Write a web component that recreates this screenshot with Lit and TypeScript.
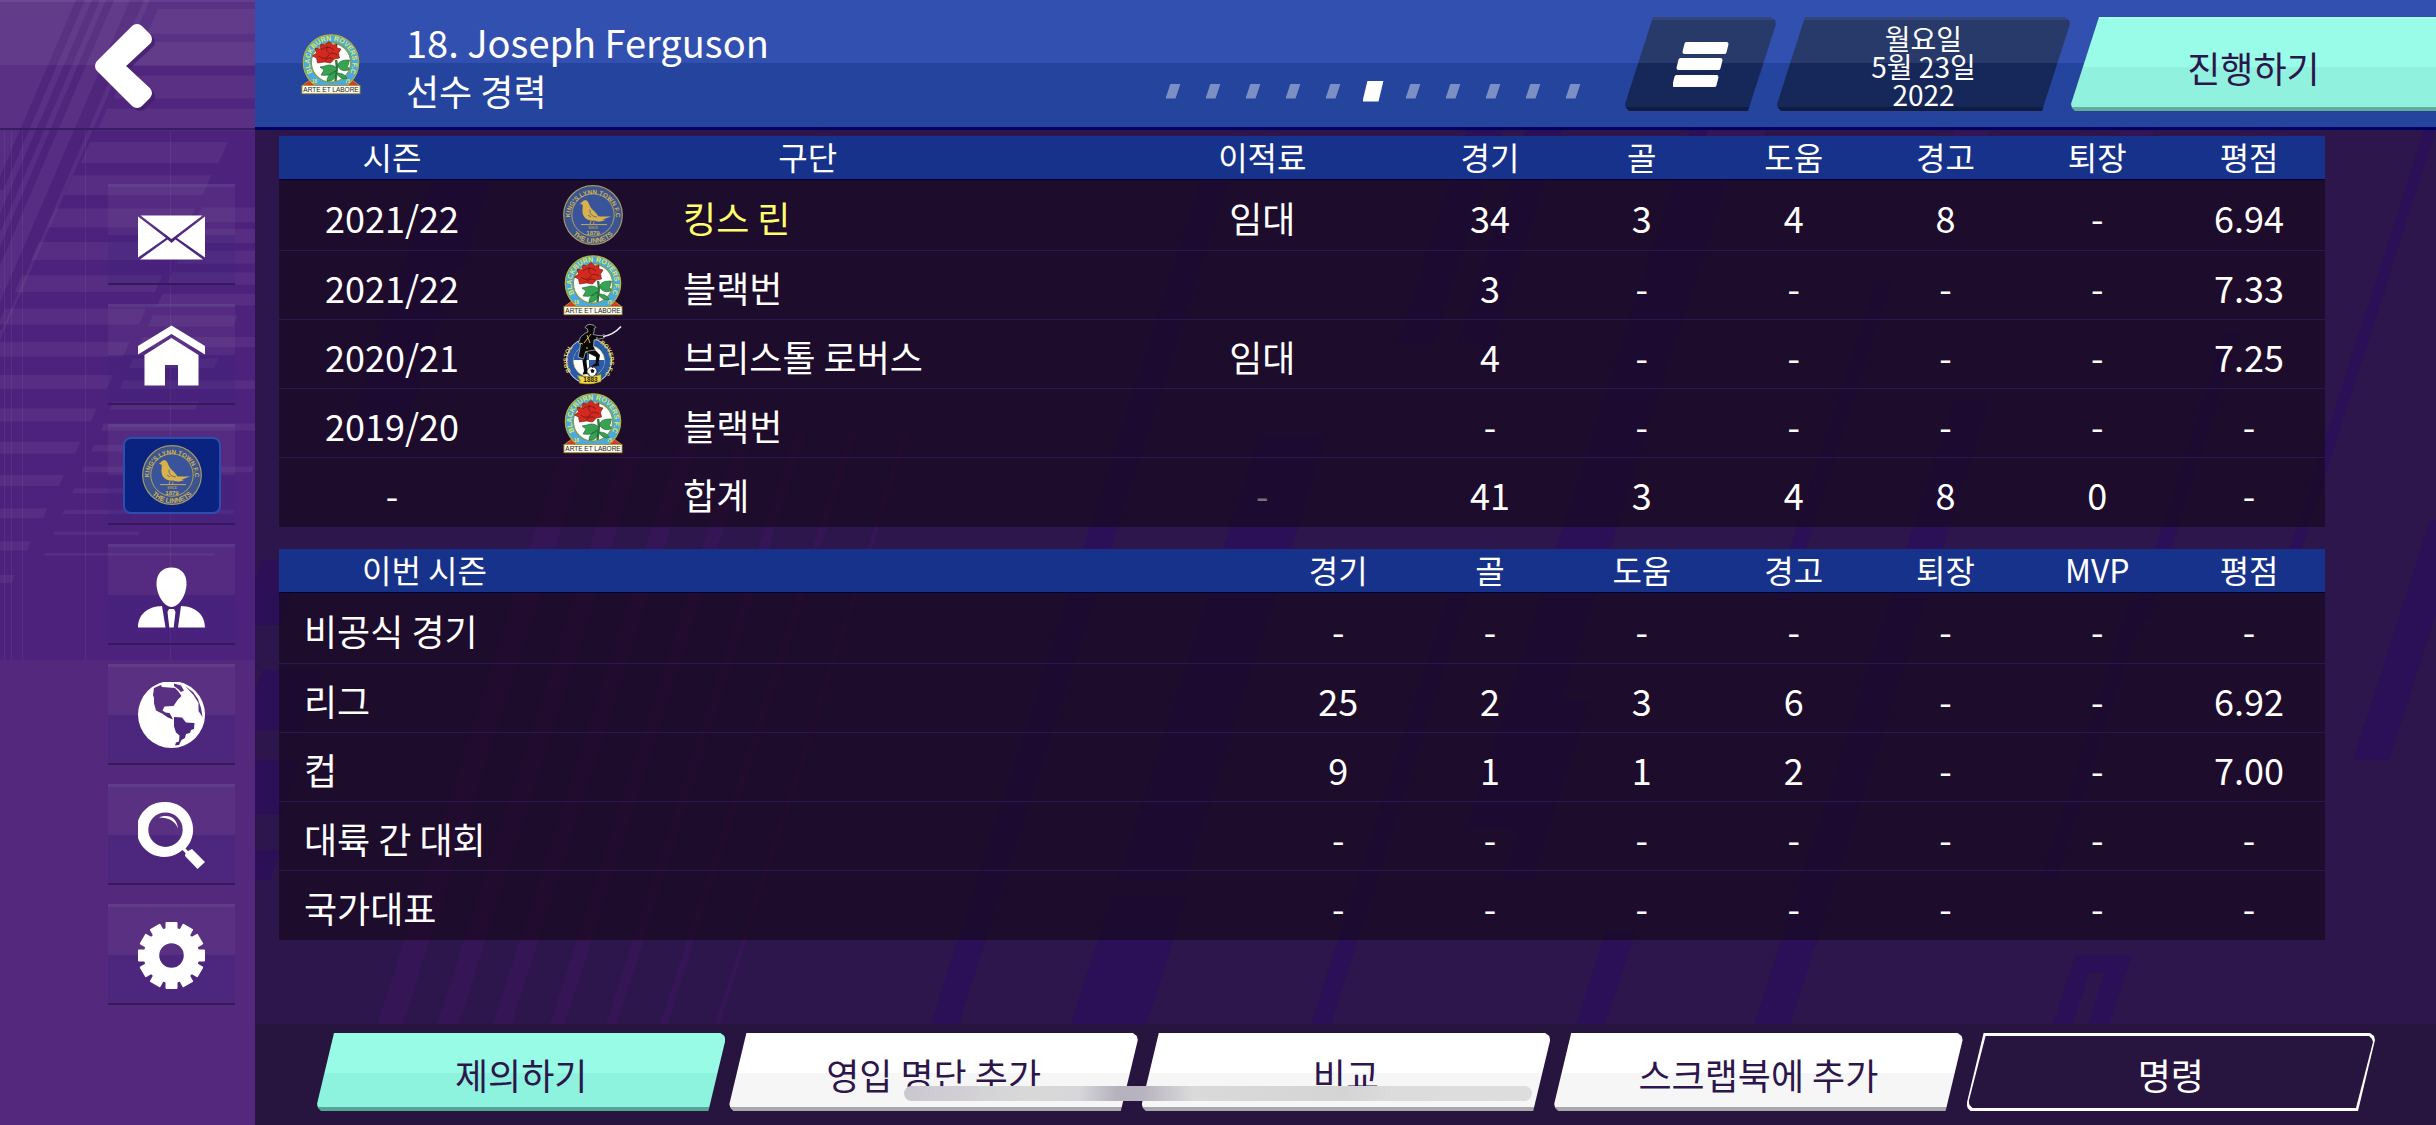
import { LitElement, html, svg, css, nothing } from "lit";
import { customElement, property } from "lit/decorators.js";
import { classMap } from "lit/directives/class-map.js";

type Club = "kings" | "blackburn" | "bristol";

@customElement("club-crest")
export class ClubCrest extends LitElement {
  @property() club: Club = "blackburn";

  static styles = css`
    :host {
      display: block;
      width: 60px;
      height: 60px;
    }
    svg {
      display: block;
      width: 100%;
      height: 100%;
      overflow: visible;
      font-family: "Liberation Sans", sans-serif;
      font-weight: 700;
    }
  `;

  private kings() {
    return svg`
      <defs>
        <path id="top" d="M7.2 32a22.8 22.8 0 1 1 45.6 0" />
        <path id="base" d="M2 30a28 28 0 0 0 56 0" />
      </defs>
      <circle cx="30" cy="30" r="29.3" fill="#3c558f" stroke="#a59a68" stroke-width="1.2" />
      <circle cx="30" cy="30" r="21.2" fill="#39549a" stroke="#b5a15c" stroke-width="1" />
      <text fill="#cdb257" font-size="6.3"><textPath href="#top" startOffset="50%" text-anchor="middle">KING'S LYNN TOWN F.C</textPath></text>
      <text fill="#cdb257" font-size="6.8"><textPath href="#base" startOffset="50%" text-anchor="middle">THE LINNETS</textPath></text>
      <path fill="#d9b24a" d="M17 18.4l2.2-1.4c1-2 4.6-2.4 6 .2 1.4 2.6 2 5.400 4.400 7.600 3 2.600 4.600 4.600 5.600 6.400 4.400.6 8.600.2 13 .2-3 1.200-5.800 2-8.600 3.200 1 .2 2 .2 3 .1-3.400 1.900-8.200 2.400-11.400.9-6.600.6-11.600-3.200-11.800-9.400-.1-3 .9-4.800.1-6.500z" />
      <path fill="none" stroke="#39549a" stroke-width=".7" d="M27 24.500c-.5 4 1.500 7 7 7.500M25 30l3 2" />
      <path stroke="#c9a94f" stroke-width="1" d="M18 39.600h26" />
      <path stroke="#c9a94f" stroke-width=".9" d="M28 36l-1 3.500M31 36.500l-.5 3" />
      <text x="30" y="44" font-size="3.2" fill="#a89a5c" text-anchor="middle">SINCE</text>
      <text x="30" y="49.500" font-size="6" fill="#d3b552" text-anchor="middle">1879</text>
    `;
  }

  private blackburn() {
    return svg`
      <defs>
        <path id="ring" d="M12.200 40a21.400 21.400 0 1 1 35.600 0" />
      </defs>
      <path fill="#d63a2c" stroke="#b9a52c" stroke-width=".8" d="M1.500 51.500l8-6h41l8 6z" />
      <circle cx="30" cy="28.500" r="27.700" fill="#4aa9df" stroke="#b5b534" stroke-width="1.200" />
      <circle cx="30" cy="28.500" r="19.600" fill="#fff" stroke="#8f9a2c" stroke-width="1.100" />
      <text fill="#e3e84c" font-size="7"><textPath href="#ring" startOffset="50%" text-anchor="middle">BLACKBURN ROVERS F.C</textPath></text>
      <text x="13.500" y="48.800" font-size="4.600" fill="#e3e84c" text-anchor="middle">18</text>
      <text x="46.500" y="48.800" font-size="4.600" fill="#e3e84c" text-anchor="middle">75</text>
      <path fill="none" stroke="#2b7a3a" stroke-width="2.400" d="M35 26c2 8 0 14-.5 21" />
      <path fill="#36a352" stroke="#1d5c2d" stroke-width=".6" d="M36.500 32c1-5 5-6 12-6-1 3-.5 5-2.500 6.500 0 0 2 .5 2 3-4 2.500-9 1-11.500-3.500zM36 35c-2-4-8-5-12-3l-5 1 4 3-3 5c6 1 13 0 16-6zM35 37c-5 1-9 5-9 10 5 1 9-2 9-10zM36 39c1 4 5 6 10 6-1-4-5-6-10-6z" />
      <path fill="#d32a20" stroke="#6d1512" stroke-width=".6" d="M14 14l5 1 1-5 4 1 4-3.500 4 3.500 4-1v4l4 1-2.500 4 1 5-5 1-4 4-6-1-7 1-1-5-4-2 4-3z" />
      <path fill="none" stroke="#7c1713" stroke-width=".9" d="M20 16c3-3 9-4 13 0M18 22c3 3 7 3 9 0s5-4 9-1M24 27c1-3 4-4 8-2M27 12c-2 3-2 5 1 7" />
      <rect x="1" y="51.500" width="58" height="8.200" fill="#fffdf2" stroke="#a8922a" stroke-width=".9" />
      <text x="30" y="58" font-size="6.500" font-weight="400" fill="#222" text-anchor="middle">ARTE ET LABORE</text>
    `;
  }

  private bristol() {
    return svg`
      <defs>
        <path id="left" d="M17.500 55.500a20.500 20.500 0 0 1 3-39" />
        <path id="right" d="M31 17a20.500 20.500 0 0 1 6 37.500" />
      </defs>
      <circle cx="26" cy="37" r="22.500" fill="#2a5aa8" stroke="#dfe6ee" stroke-width="1" />
      <circle cx="26" cy="37" r="15.500" fill="#fff" stroke="#e5d84a" stroke-width=".6" />
      <path fill="#2a5aa8" d="M26 36V21.500A15.500 15.500 0 0 0 10.500 36zM26 36v16.500A15.500 15.500 0 0 0 41.500 36z" />
      <text fill="#eadf4e" font-size="6"><textPath href="#left" startOffset="50%" text-anchor="middle">BRISTOL</textPath></text>
      <text fill="#eadf4e" font-size="6"><textPath href="#right" startOffset="50%" text-anchor="middle">ROVERS F.C</textPath></text>
      <path fill="#08080a" d="M20 27l4 1-.5 10L25 50l-5.500.5L21 47l-1.500-10z" />
      <path fill="#08080a" d="M23 24l6-1 8 8-1.500 8 1 2.500-7 1.500v-2l3-1.500.5-6.500-8-4z" />
      <path fill="#08080a" stroke="#e3e6ea" stroke-width=".6" d="M22 3.500l2-2.500 3-.7 4 1 2 2.200-2 .8.3 3-1.300 3 4 1 5 .5 2-1.500 1.500 1.500L41 14l-8 1.500-2 .5-.5 6 2 4-7 1-3 1-2 7-5.500-2 1.500-6 1-7-2-1 2-6 5-4 2.500-1-.5-3z" />
      <path fill="none" stroke="#d9b93a" stroke-width="1" d="M24 11l3 8M28 10l-7 9M17 19l3 1M23 24h2M22 28h2M34 13v2" />
      <path fill="none" stroke="#e6e9ee" stroke-width="1.700" d="M40 12.500c7-1 13-4.500 18-10" />
      <circle cx="29" cy="47.500" r="5" fill="#fff" stroke="#111" stroke-width=".8" />
      <path fill="#111" d="M27.500 46l2-1 2 1.500-.8 2.300h-2.400zM25 49l1.500 1-.5 1.500zM32 50l1.500-1v2.500zM28 42.800l3 .2-1.500 1z" />
      <path fill="#f2d93c" stroke="#9b8420" stroke-width=".6" d="M14.500 51.500c8 2 16 1.500 23.500-1v7c-7 2.500-15 3-22 1.500l1.500-2z" />
      <text x="27.500" y="58" font-size="6.500" fill="#2a2410" text-anchor="middle">1883</text>
    `;
  }

  render() {
    const art =
      this.club === "kings" ? this.kings() : this.club === "bristol" ? this.bristol() : this.blackburn();
    return html`<svg viewBox="0 0 60 60" aria-hidden="true">${art}</svg>`;
  }
}

interface CareerRow {
  season: string;
  club?: Club;
  name: string;
  fee: string;
  muted?: boolean;
  current?: boolean;
  stats: string[];
}

const CAREER: CareerRow[] = [
  { season: "2021/22", club: "kings", name: "킹스 린", fee: "임대", current: true, stats: ["34", "3", "4", "8", "-", "6.94"] },
  { season: "2021/22", club: "blackburn", name: "블랙번", fee: "", stats: ["3", "-", "-", "-", "-", "7.33"] },
  { season: "2020/21", club: "bristol", name: "브리스톨 로버스", fee: "임대", stats: ["4", "-", "-", "-", "-", "7.25"] },
  { season: "2019/20", club: "blackburn", name: "블랙번", fee: "", stats: ["-", "-", "-", "-", "-", "-"] },
  { season: "-", name: "합계", fee: "-", muted: true, stats: ["41", "3", "4", "8", "0", "-"] },
];

const THIS_SEASON: { name: string; stats: string[] }[] = [
  { name: "비공식 경기", stats: ["-", "-", "-", "-", "-", "-", "-"] },
  { name: "리그", stats: ["25", "2", "3", "6", "-", "-", "6.92"] },
  { name: "컵", stats: ["9", "1", "1", "2", "-", "-", "7.00"] },
  { name: "대륙 간 대회", stats: ["-", "-", "-", "-", "-", "-", "-"] },
  { name: "국가대표", stats: ["-", "-", "-", "-", "-", "-", "-"] },
];

const gearTeeth = Array.from({ length: 12 }, (_, i) => i * 30);

const ICONS = {
  mail: svg`
    <path fill="#fff" d="M2.500 13.500h62L33.500 37z" />
    <path fill="#fff" d="M0 14.500L28 36 0 55.500zM67 14.500L39 36l28 19.500z" />
    <path fill="#fff" d="M2 57.500L29.500 37.500l4 3.500 4-3.500L65 57.500z" />`,
  home: svg`
    <path fill="#fff" d="M33.500 3.500L67 24v8.500L33.500 12 0 32.500V24z" />
    <path fill="#fff" d="M33.500 16L60.500 33v30.500H40V43H27v20.500H6.500V33z" />`,
  person: svg`
    <path fill="#fff" d="M33.500 5.500c9 0 15 6 15 16 0 12-8 23.500-15 23.500s-15-11.500-15-23.500c0-10 6-16 15-16z" />
    <path fill="#fff" d="M24 44l3.500 21.500H0C0 53 9 44.500 24 44zM43 44c15 .5 24 9 24 21.500H40z" />
    <path fill="#fff" d="M31 47h5l1.500 3-1.800 15.500h-4.400L29.500 50z" />`,
  globe: svg`
    <path fill="#fff" fill-rule="evenodd" d="M33.500 -1a33.500 33.500 0 1 1 0 67 33.500 33.500 0 0 1 0-67zM16 6l7-3 1 2 13 1 3 3 3.500 5-4 4-4 6-9 .5-2 4 3 2 4 .5 2 3.500 1.500 3-5-2-6-4-6-3-2-7V16l-1-3zM36 35l8 .5 4 5 8.500.5-.5 6-3 1-1 3-4 1-1 4-3.500 2-2.500 5-4 .5 1-3 3-1 .5-6-3.500-3-2-6V37zM36 1.500l7 2 3 5-3 1.500-3-3-4-3zM47 4l8 6 5 7 3 9 1.500 9-4-6v-8l-5-8z" />`,
  search: svg`
    <path fill="#fff" fill-rule="evenodd" d="M27.500 0a27.500 27.500 0 0 1 20 46.500l2.500 2.500 4-2L67 60l-7.500 7L47 54l.500-3-3-3A27.500 27.500 0 1 1 27.500 0zM27.500 10.500a17.200 17.200 0 1 0 0 34.400 17.200 17.200 0 0 0 0-34.400z" />
    <path fill="#fff" d="M21 15.500c10-4 18 .5 19 11-3-7.500-9-11-19-11z" />`,
  gear: svg`
    <circle cx="33.500" cy="33.500" r="20" fill="none" stroke="#fff" stroke-width="15.500" />
    ${gearTeeth.map(
      (angle) => svg`<path fill="#fff" stroke="#fff" stroke-width="2" stroke-linejoin="round" transform="rotate(${angle} 33.500 33.500)" d="M28.500 1h10v9h-10z" />`
    )}`,
};

const MENU: { label: string; icon?: unknown }[] = [
  { label: "받은 편지함", icon: ICONS.mail },
  { label: "홈", icon: ICONS.home },
  { label: "구단" },
  { label: "감독", icon: ICONS.person },
  { label: "세계", icon: ICONS.globe },
  { label: "검색", icon: ICONS.search },
  { label: "설정", icon: ICONS.gear },
];

/* Slanted band: top-left corner, width, and the y at which it ends. */
const band = (x: number, y: number, w: number, end: number, slope: number, fill: string) => {
  const shift = (end - y) * slope;
  return svg`<path fill=${fill} d="M${x} ${y}h${w}L${x + w - shift} ${end}h${-w}z" />`;
};

const BLUE = "#2c1057";
const PLUM = "#351556";
const BACKDROP: [number, number, number, number, string][] = [
  [564, 440, 26, 1025, PLUM], [624, 440, 22, 1025, PLUM], [683, 430, 19, 1025, PLUM],
  [740, 430, 15, 1025, PLUM], [796, 430, 11, 1025, PLUM], [850, 430, 8, 1025, PLUM],
  [905, 430, 5, 1025, PLUM],
  [430, 183, 60, 270, BLUE], [400, 270, 56, 440, BLUE],
  [1200, 183, 28, 1025, BLUE], [1466, 130, 36, 345, BLUE], [1526, 130, 36, 345, BLUE],
  [1260, 434, 68, 880, BLUE], [1112, 895, 76, 1025, BLUE],
  [1690, 130, 54, 830, BLUE], [1450, 590, 20, 1025, BLUE], [1876, 280, 16, 600, BLUE],
  [1954, 400, 36, 1025, BLUE], [1606, 930, 30, 1025, BLUE], [1560, 700, 30, 880, BLUE],
  [2130, 600, 16, 880, BLUE], [2424, 130, 12, 560, BLUE], [2225, 330, 16, 620, BLUE],
  [2430, 520, 36, 760, BLUE], [262, 560, 40, 625, BLUE], [262, 670, 60, 730, BLUE],
  [250, 760, 50, 815, BLUE], [250, 850, 30, 880, BLUE],
  [2075, 955, 20, 1025, BLUE], [2110, 955, 22, 1025, BLUE], [2090, 955, 28, 973, BLUE],
  [1708, 130, 58, 137, PLUM], [1955, 130, 34, 137, PLUM], [2120, 130, 34, 137, PLUM],
];

const RAIL_LIGHT = "rgba(255,255,255,.05)";
const RAIL_DARK = "rgba(66,22,112,.45)";

@customElement("app-root")
export class AppRoot extends LitElement {
  static styles = css`
    :host {
      --ink: #2d164b;
      --mint: #98fbe6;
      --bar: #17328b;
      display: block;
      color: #fff;
      font-family: "Noto Sans CJK KR", sans-serif;
      font-size: 36px;
      line-height: 48px;
    }
    * {
      box-sizing: border-box;
    }
    button {
      margin: 0;
      padding: 0;
      border: 0;
      background: none;
      color: inherit;
      font: inherit;
      cursor: pointer;
    }
    .app {
      position: relative;
      display: grid;
      grid-template-columns: 255px minmax(0, 1fr);
      min-height: 100vh;
      overflow: hidden;
      background: #2d164b;
    }

    .rail {
      position: relative;
      isolation: isolate;
      display: flex;
      flex-direction: column;
      background: linear-gradient(#4d227c 660px, #53287d 660px);
    }
    .rail-art {
      position: absolute;
      z-index: -1;
      inset: 0 auto auto 0;
      width: 255px;
      height: 660px;
    }
    .back {
      display: block;
      height: 130px;
      border-top: 2px solid rgba(255, 255, 255, 0.12);
      border-bottom: 2px solid #3a1d60;
      background: linear-gradient(rgba(255, 255, 255, 0.07) 50%, rgba(255, 255, 255, 0.015) 50%);
    }
    .back svg {
      display: block;
      width: 255px;
      height: 126px;
    }
    .menu {
      display: flex;
      flex-direction: column;
      gap: 19px;
      margin: 0;
      padding: 54px 20px 0 108px;
      list-style: none;
    }
    .tile {
      display: flex;
      align-items: center;
      justify-content: center;
      width: 127px;
      height: 101px;
      border-top: 3px solid rgba(255, 255, 255, 0.1);
      border-bottom: 2px solid #371858;
      background: linear-gradient(rgba(255, 255, 255, 0.04) 50%, rgba(58, 35, 125, 0.25) 50%);
    }
    .icon {
      display: block;
      width: 67px;
      height: 67px;
    }
    .badge {
      display: flex;
      align-items: center;
      justify-content: center;
      width: 98px;
      height: 77px;
      border: 2px solid #2a4fae;
      border-radius: 8px;
      background: #0a2280;
    }

    .main {
      position: relative;
      isolation: isolate;
      display: flex;
      flex-direction: column;
      min-width: 0;
    }
    .backdrop {
      position: absolute;
      z-index: -1;
      inset: 0;
      width: 100%;
      height: 100%;
    }
    .top {
      display: flex;
      height: 130px;
      padding-left: 46px;
      border-bottom: 3px solid #00005f;
      background: linear-gradient(#3250af 50%, #24449d 50%);
    }
    .top club-crest {
      margin-top: 34px;
    }
    .title {
      flex: 1;
      min-width: 0;
      padding: 18px 0 0 45px;
    }
    .title h1,
    .title h2 {
      margin: 0;
      font-size: 38px;
      font-weight: 400;
      line-height: 48px;
      white-space: nowrap;
    }
    .title h2 {
      font-size: 36px;
    }
    .pages {
      display: flex;
      align-items: center;
      align-self: flex-end;
      width: 440px;
      height: 22px;
      margin: 0 32px 25px 0;
      padding: 0;
      list-style: none;
    }
    .pages li {
      flex: 1;
      display: flex;
      justify-content: center;
    }
    .pages button {
      width: 15px;
      height: 15px;
      background: #7b8fc5;
      clip-path: polygon(5px 0, 100% 0, calc(100% - 5px) 100%, 0 100%);
    }
    .pages button.on {
      width: 21px;
      height: 21px;
      background: #fff;
    }

    .slant {
      --lean: 17px;
      position: relative;
      isolation: isolate;
      display: flex;
      align-items: center;
      justify-content: center;
      text-align: center;
      white-space: nowrap;
      clip-path: polygon(
        var(--lean) 0,
        calc(100% - 5px) 0,
        calc(100% - 1px) 3px,
        100% 7px,
        calc(100% - var(--lean)) 100%,
        4px 100%,
        1px calc(100% - 3px),
        0 calc(100% - 7px)
      );
    }
    .controls {
      display: flex;
      gap: 1px;
      padding-top: 17px;
    }
    .controls .slant {
      --lean: 28px;
      height: 94px;
    }
    .dark {
      border-top: 3px solid #33457a;
      border-bottom: 4px solid #101c40;
      background: linear-gradient(#273a6a 50%, #162859 50%);
    }
    .more {
      width: 151px;
    }
    .more svg {
      display: block;
      width: 56px;
      height: 46px;
    }
    .date {
      width: 293px;
      padding-top: 4px;
      font-size: 28px;
      line-height: 28px;
    }
    .next {
      width: 365px;
      padding-top: 8px;
      border-top: 2px solid #a6fff0;
      border-bottom: 4px solid #63ac9c;
      background: linear-gradient(#98fce8 54%, #90f1de 54%);
      color: var(--ink);
    }
    .controls .next {
      clip-path: polygon(28px 0, 100% 0, 100% 100%, 4px 100%, 1px calc(100% - 3px), 0 calc(100% - 7px));
    }

    .content {
      flex: 1;
      display: flex;
      flex-direction: column;
      gap: 22px;
      padding: 6px 111px 24px 24px;
    }
    table {
      width: 100%;
      border-spacing: 0;
      table-layout: fixed;
      background: rgba(18, 6, 17, 0.56);
      text-align: center;
    }
    th,
    td {
      padding: 0;
      font-weight: 400;
      white-space: nowrap;
    }
    thead th {
      height: 44px;
      padding-bottom: 3px;
      border-bottom: 1px solid #020238;
      background: var(--bar);
      font-size: 32px;
      line-height: 40px;
    }
    tbody th,
    tbody td {
      height: 69px;
      padding-top: 3px;
      border-bottom: 1px solid #2b174d;
    }
    tbody tr:first-child > * {
      height: 71px;
    }
    tbody tr:last-child > * {
      border-bottom: 0;
    }
    .c-season {
      width: 11.05%;
    }
    .c-crest {
      width: 8.6%;
    }
    .c-name {
      width: 20.99%;
    }
    .c-fee {
      width: 14.84%;
    }
    .c-stat {
      width: 7.42%;
    }
    tbody .crest {
      padding: 0;
    }
    .crest club-crest {
      margin: 0 auto;
    }
    .name {
      padding-left: 2px;
      text-align: left;
    }
    .current {
      color: #ffff6b;
    }
    .muted {
      color: #77707d;
    }
    thead .lead {
      padding-left: 83px;
      text-align: left;
    }
    tbody .lead {
      padding-left: 25px;
      text-align: left;
    }

    .actions {
      display: grid;
      grid-template-columns: repeat(5, minmax(0, 1fr));
      gap: 4px;
      padding: 9px 61px 14px 62px;
      background: #27153f;
    }
    .actions .slant {
      height: 78px;
      padding-top: 7px;
      border-bottom: 4px solid #a8a7ac;
      background: linear-gradient(#fff 54%, #f6f6f6 54%);
      color: var(--ink);
    }
    .actions .primary {
      border-bottom-color: #52a794;
      background: linear-gradient(var(--mint) 54%, #8df2de 54%);
    }
    .actions .ghost {
      border-bottom: 0;
      padding-top: 3px;
      background: #fff;
      color: #fff;
    }
    .ghost::before {
      content: "";
      position: absolute;
      z-index: -1;
      inset: 3px 2px;
      background: #27153f;
      clip-path: polygon(
        17px 0,
        calc(100% - 4px) 0,
        calc(100% - 1px) 3px,
        100% 6px,
        calc(100% - 17px) 100%,
        4px 100%,
        1px calc(100% - 3px),
        0 calc(100% - 6px)
      );
    }
    .home-bar {
      position: absolute;
      bottom: 24px;
      left: 50%;
      width: 628px;
      height: 15px;
      margin-left: -314px;
      border-radius: 8px;
      background: linear-gradient(90deg, #cbc7d0, #d9d9d9 20%, #d6d5d9 28%, #b5b1bd 34%, #b7b3bf 38%, #dadada 46%, #d4d4d5 70%, #dcdcdc 78%, #dddddd);
    }
  `;

  private railArt() {
    const left = Array.from({ length: 18 }, (_, k) => k - 4).map((i) => {
      const y = 142 + 33.3 * i;
      const x = Math.max(90 - 17 * i, -20);
      const right = i < 0 ? 290 : 228 - 16.4 * i;
      return band(x, y, Math.max(right - x, 10), y + 21 - i, 0.45, RAIL_LIGHT);
    });
    const right = Array.from({ length: 17 }, (_, k) => k - 1).map((i) => {
      const y = 229 + 21.6 * i;
      const x = 192 - 9.8 * i;
      const w = i > 3 && i % 2 === 0 ? 85 : 170;
      return band(x, y, w, y + 14 - 0.75 * i, 0.45, RAIL_LIGHT);
    });
    return svg`
      <path fill="rgba(255,255,255,.05)" d="M0 0h150L0 340z" />
      ${band(76, 0, 9, 190, 0.43, RAIL_DARK)}
      ${band(92, 0, 8, 230, 0.43, RAIL_DARK)}
      ${band(106, 0, 8, 265, 0.43, RAIL_DARK)}
      ${band(130, 0, 14, 330, 0.43, RAIL_DARK)}
      ${left}${right}
      <path stroke="rgba(255,255,255,.05)" d="M4.500 130v530M11.500 130v530M22.500 130v530M85.500 130v530M170.500 130v530" />
    `;
  }

  private header() {
    return html`
      <header class="top">
        <club-crest club="blackburn"></club-crest>
        <div class="title">
          <h1>18. Joseph Ferguson</h1>
          <h2>선수 경력</h2>
        </div>
        <ul class="pages">
          ${Array.from({ length: 11 }, (_, i) => html`
            <li><button class=${classMap({ on: i === 5 })} aria-label=${`${i + 1}`}></button></li>
          `)}
        </ul>
        <div class="controls">
          <button class="slant dark more" aria-label="메뉴">
            <svg viewBox="0 0 56 46" aria-hidden="true">
              <path fill="#fff" stroke="#fff" stroke-width="4" stroke-linejoin="round"
                d="M13.500 3h40l-2 8h-40zM7.500 19h40l-2 8h-40zM3.500 36h40l-2 8h-40z" />
            </svg>
          </button>
          <button class="slant dark date">월요일<br />5월 23일<br />2022</button>
          <button class="slant next">진행하기</button>
        </div>
      </header>
    `;
  }

  private careerTable() {
    return html`
      <table>
        <colgroup>
          <col class="c-season" /><col class="c-crest" /><col class="c-name" /><col class="c-fee" />
          ${[0, 1, 2, 3, 4, 5].map(() => html`<col class="c-stat" />`)}
        </colgroup>
        <thead>
          <tr>
            <th scope="col">시즌</th>
            <th scope="col" colspan="2">구단</th>
            <th scope="col">이적료</th>
            ${["경기", "골", "도움", "경고", "퇴장", "평점"].map((t) => html`<th scope="col">${t}</th>`)}
          </tr>
        </thead>
        <tbody>
          ${CAREER.map((row) => html`
            <tr>
              <td>${row.season}</td>
              <td class="crest">${row.club ? html`<club-crest club=${row.club}></club-crest>` : nothing}</td>
              <td class=${classMap({ name: true, current: !!row.current })}>${row.name}</td>
              <td class=${classMap({ muted: !!row.muted })}>${row.fee}</td>
              ${row.stats.map((s) => html`<td>${s}</td>`)}
            </tr>
          `)}
        </tbody>
      </table>
    `;
  }

  private seasonTable() {
    return html`
      <table>
        <colgroup>
          <col />
          ${[0, 1, 2, 3, 4, 5, 6].map(() => html`<col class="c-stat" />`)}
        </colgroup>
        <thead>
          <tr>
            <th scope="col" class="lead">이번 시즌</th>
            ${["경기", "골", "도움", "경고", "퇴장", "MVP", "평점"].map((t) => html`<th scope="col">${t}</th>`)}
          </tr>
        </thead>
        <tbody>
          ${THIS_SEASON.map((row) => html`
            <tr>
              <th scope="row" class="lead">${row.name}</th>
              ${row.stats.map((s) => html`<td>${s}</td>`)}
            </tr>
          `)}
        </tbody>
      </table>
    `;
  }

  render() {
    return html`
      <div class="app">
        <nav class="rail">
          <svg class="rail-art" viewBox="0 0 255 660" aria-hidden="true">${this.railArt()}</svg>
          <button class="back" aria-label="뒤로">
            <svg viewBox="0 2 255 126" aria-hidden="true">
              <path fill="#3f1d68" stroke="#3f1d68" stroke-width="14" stroke-linejoin="round" opacity=".7"
                d="M105 69L140 34l8 8-29 27 29 27-8 8z" />
              <path fill="#fff" stroke="#fff" stroke-width="14" stroke-linejoin="round"
                d="M102 66L137 31l8 8-29 27 29 27-8 8z" />
            </svg>
          </button>
          <ul class="menu">
            ${MENU.map((item) => html`
              <li>
                <button class="tile" aria-label=${item.label}>
                  ${item.icon
                    ? html`<svg class="icon" viewBox="0 0 67 67" aria-hidden="true">${item.icon}</svg>`
                    : html`<span class="badge"><club-crest club="kings"></club-crest></span>`}
                </button>
              </li>
            `)}
          </ul>
        </nav>
        <div class="main">
          <svg class="backdrop" viewBox="255 0 2181 1125" preserveAspectRatio="xMinYMin slice" aria-hidden="true">
            ${BACKDROP.map(([x, y, w, end, fill]) => band(x, y, w, end, 0.32, fill))}
          </svg>
          ${this.header()}
          <main class="content">${this.careerTable()} ${this.seasonTable()}</main>
          <footer class="actions">
            <button class="slant primary">제의하기</button>
            <button class="slant">영입 명단 추가</button>
            <button class="slant">비교</button>
            <button class="slant">스크랩북에 추가</button>
            <button class="slant ghost">명령</button>
          </footer>
        </div>
        <div class="home-bar"></div>
      </div>
    `;
  }
}
